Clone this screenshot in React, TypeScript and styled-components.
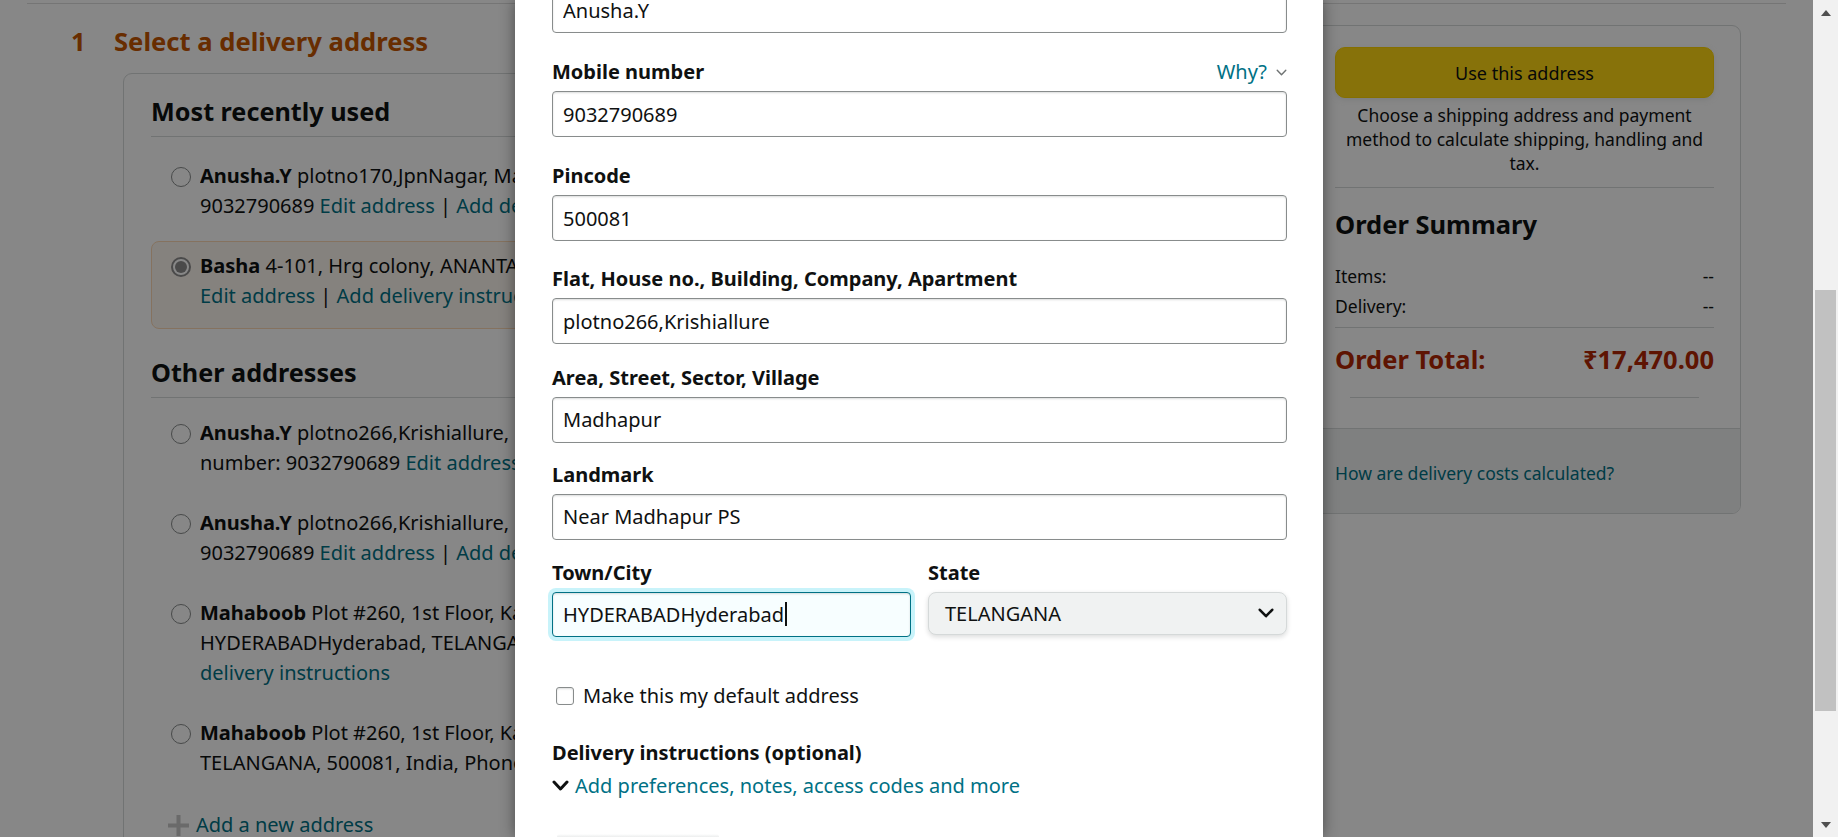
import React from "react";
import styled, { createGlobalStyle } from "styled-components";

const GlobalStyle = createGlobalStyle`
  html, body { margin: 0; padding: 0; height: 100%; overflow: hidden; }
  body {
    font-family: "Noto Sans", "Open Sans", "Liberation Sans", sans-serif;
    color: #0f1111;
    background: #fff;
  }
  #root { height: 100%; }
  *, *::before, *::after { box-sizing: border-box; }
`;

const Screen = styled.div`
  display: flex;
  width: 100%;
  height: 100vh;
`;

const Viewport = styled.div`
  position: relative;
  flex: 1;
  min-width: 0;
  overflow: hidden;
  background: #fff;
`;

const Page = styled.div`
  padding: 3px 27px 0;
`;

const Main = styled.div`
  display: flex;
  align-items: flex-start;
  gap: 24px;
  border-top: 1px solid #dddddd;
`;

const LeftCol = styled.div`
  flex: 1;
  min-width: 0;
  padding: 22px 0 0 44px;
`;

const StepHeader = styled.h2`
  display: flex;
  margin: 0;
  font-size: 25.6px;
  line-height: 32px;
  font-weight: 700;
  color: #c45500;
`;

const StepNumber = styled.span`
  width: 43px;
`;

const Card = styled.div`
  margin: 15px 0 0 52px;
  padding: 21px 27px 40px;
  border: 1px solid #d5d9d9;
  border-radius: 9px;
  overflow: hidden;
`;

const SectionTitle = styled.h3<{ $mt?: number }>`
  margin: ${(p) => p.$mt ?? 0}px 0 0;
  padding-bottom: 9px;
  border-bottom: 1px solid #d5d9d9;
  font-size: 25.2px;
  line-height: 32px;
  font-weight: 700;
  color: #0f1111;
`;

const AddressList = styled.div<{ $mt: number }>`
  display: flex;
  flex-direction: column;
  gap: 2px;
  margin-top: ${(p) => p.$mt}px;
`;

const AddressRow = styled.div<{ $selected?: boolean }>`
  display: flex;
  align-items: flex-start;
  gap: 9px;
  padding: 9px 0 17px 19px;
  border: 1px solid ${(p) => (p.$selected ? "#fbd8b4" : "transparent")};
  border-radius: 8px;
  background: ${(p) => (p.$selected ? "#fcf5ee" : "transparent")};
`;

const Radio = styled.span<{ $checked?: boolean }>`
  position: relative;
  flex: none;
  width: 20px;
  height: 20px;
  margin-top: 6px;
  border-radius: 50%;
  background: #fff;
  border: ${(p) => (p.$checked ? "2px solid #8c8c8c" : "1px solid #888c8c")};
  &::after {
    content: "";
    display: ${(p) => (p.$checked ? "block" : "none")};
    position: absolute;
    inset: 2px;
    border-radius: 50%;
    background: #8c8c8c;
  }
`;

const AddressText = styled.div`
  min-width: 0;
  overflow: hidden;
`;

const Line = styled.div`
  white-space: nowrap;
  font-size: 20px;
  line-height: 30px;
  color: #0f1111;
`;

const Name = styled.b`
  font-weight: 700;
`;

const Link = styled.span`
  color: #007185;
`;

const AddNew = styled.div`
  display: flex;
  align-items: center;
  gap: 7px;
  margin-top: 14px;
  padding-left: 17px;
  font-size: 20px;
  line-height: 30px;
  color: #007185;
`;

const RightCol = styled.aside`
  flex: none;
  width: 433px;
  margin: 21px 45px 0 0;
`;

const SummaryCard = styled.div`
  border: 1px solid #d5d9d9;
  border-radius: 9px;
  overflow: hidden;
  background: #fff;
`;

const SummaryTop = styled.div`
  padding: 21px 26px 30px;
`;

const PrimaryButton = styled.button`
  display: block;
  width: 100%;
  height: 51px;
  border: 1px solid #fcd200;
  border-radius: 10px;
  background: #ffd814;
  box-shadow: 0 2px 5px 0 rgba(213, 217, 217, 0.5);
  font-family: inherit;
  font-size: 18px;
  color: #0f1111;
`;

const Note = styled.p`
  margin: 5px 0 0;
  text-align: center;
  font-size: 17.5px;
  line-height: 24px;
  color: #0f1111;
`;

const Divider = styled.hr<{ $mt: number; $inset?: number }>`
  margin: ${(p) => p.$mt}px ${(p) => p.$inset ?? 0}px 0;
  border: 0;
  border-top: 1px solid #d5d9d9;
`;

const SummaryTitle = styled.h3`
  margin: 20px 0 0;
  font-size: 25.5px;
  line-height: 32px;
  font-weight: 700;
`;

const SummaryRows = styled.div`
  display: flex;
  flex-direction: column;
  gap: 6px;
  margin-top: 24px;
`;

const SummaryRow = styled.div`
  display: flex;
  justify-content: space-between;
  font-size: 17.5px;
  line-height: 24px;
`;

const TotalRow = styled.div`
  display: flex;
  justify-content: space-between;
  margin-top: 15px;
  font-size: 25.5px;
  line-height: 32px;
  font-weight: 700;
  color: #b12704;
`;

const SummaryBottom = styled.div`
  padding: 32px 26px 28px;
  border-top: 1px solid #d5d9d9;
  background: #f0f2f2;
  font-size: 17.5px;
  line-height: 24px;
  color: #007185;
`;

const Backdrop = styled.div`
  position: absolute;
  inset: 0;
  background: rgba(0, 0, 0, 0.47);
`;

const Modal = styled.div`
  position: absolute;
  top: 0;
  bottom: 0;
  left: 515px;
  width: 808px;
  padding: 0 36px 0 37px;
  background: #fff;
  box-shadow: 0 0 14px rgba(0, 0, 0, 0.45);
  overflow: hidden;
`;

const ModalBody = styled.div`
  margin-top: -13px;
  display: flex;
  flex-direction: column;
`;

const Field = styled.div<{ $mt?: number }>`
  display: flex;
  flex-direction: column;
  margin-top: ${(p) => p.$mt ?? 0}px;
  min-width: 0;
`;

const LabelRow = styled.div`
  display: flex;
  justify-content: space-between;
  align-items: center;
  margin-bottom: 4px;
`;

const Label = styled.label`
  font-size: 20px;
  line-height: 30px;
  font-weight: 700;
  color: #0f1111;
`;

const WhyLink = styled.span`
  display: flex;
  align-items: center;
  gap: 9px;
  font-size: 20px;
  line-height: 30px;
  color: #007185;
`;

const TextInput = styled.input`
  width: 100%;
  height: 46px;
  padding: 0 10px;
  border: 1px solid #888c8c;
  border-radius: 4px;
  box-shadow: inset 0 1px 2px rgba(15, 17, 17, 0.15);
  background: #fff;
  font-family: inherit;
  font-size: 20px;
  color: #0f1111;
  outline: none;
`;

const FocusedBox = styled.div`
  display: flex;
  align-items: center;
  height: 45px;
  padding: 0 10px;
  border: 1px solid #007185;
  border-radius: 4px;
  background: #f7feff;
  box-shadow: 0 0 0 4px #c8f3fa, inset 0 1px 2px rgba(15, 17, 17, 0.15);
  font-size: 20px;
  color: #0f1111;
  white-space: nowrap;
`;

const Caret = styled.span`
  width: 2px;
  height: 24px;
  margin-left: 1px;
  background: #0f1111;
`;

const TwoCols = styled.div`
  display: grid;
  grid-template-columns: 1fr 1fr;
  gap: 17px;
  margin-top: 18px;
  align-items: start;
`;

const SelectBox = styled.div`
  display: flex;
  align-items: center;
  justify-content: space-between;
  height: 43px;
  padding: 0 12px 0 16px;
  border: 1px solid #d5d9d9;
  border-radius: 8px;
  background: #f0f2f2;
  box-shadow: 0 2px 5px 0 rgba(15, 17, 17, 0.15);
  font-size: 20px;
  color: #0f1111;
`;

const CheckRow = styled.label`
  display: flex;
  align-items: center;
  gap: 9px;
  margin-top: 44px;
  padding-left: 4px;
  font-size: 20px;
  line-height: 30px;
`;

const CheckBox = styled.span`
  width: 18px;
  height: 18px;
  border: 1px solid #888c8c;
  border-radius: 3px;
  background: #fff;
  box-shadow: inset 0 1px 2px rgba(15, 17, 17, 0.15);
`;

const SubHeading = styled.div`
  margin-top: 27px;
  font-size: 20px;
  line-height: 30px;
  font-weight: 700;
`;

const ExpandLink = styled.div`
  display: flex;
  align-items: center;
  gap: 6px;
  margin-top: 3px;
  font-size: 20px;
  line-height: 30px;
  color: #007185;
`;

const ButtonShadowEdge = styled.div`
  align-self: flex-start;
  width: 162px;
  height: 3px;
  margin: 33px 0 0 5px;
  border-radius: 3px 3px 0 0;
  background: linear-gradient(#ffffff, #eceeee);
`;

const Scrollbar = styled.div`
  flex: none;
  width: 25px;
  display: flex;
  flex-direction: column;
  background: #f1f1f1;
`;

const ScrollArrow = styled.div`
  height: 25px;
  display: flex;
  align-items: center;
  justify-content: center;
`;

const ScrollTrack = styled.div`
  flex: 1;
  padding: 265px 2px 0;
`;

const Thumb = styled.div`
  height: 421px;
  background: #c1c1c1;
`;

const ChevronDown = ({ w, h, sw, color }: { w: number; h: number; sw: number; color: string }) => (
  <svg width={w} height={h} viewBox={`0 0 ${w} ${h}`} fill="none">
    <polyline
      points={`${sw / 2 + 0.5},${sw / 2 + 0.5} ${w / 2},${h - sw / 2 - 0.5} ${w - sw / 2 - 0.5},${sw / 2 + 0.5}`}
      stroke={color}
      strokeWidth={sw}
      strokeLinecap="round"
      strokeLinejoin="round"
    />
  </svg>
);

const PlusIcon = () => (
  <svg width="21" height="21" viewBox="0 0 21 21">
    <rect x="8.5" y="0" width="4" height="21" fill="#c8c8c8" />
    <rect x="0" y="8.5" width="21" height="4" fill="#c8c8c8" />
  </svg>
);

const Triangle = ({ up }: { up?: boolean }) => (
  <svg width="10" height="6" viewBox="0 0 10 6">
    <polygon points={up ? "0,6 5,0 10,6" : "0,0 5,6 10,0"} fill="#505050" />
  </svg>
);

export default function App() {
  return (
    <>
      <GlobalStyle />
      <Screen>
        <Viewport>
          <Page>
            <Main>
              <LeftCol>
                <StepHeader>
                  <StepNumber>1</StepNumber>
                  <span>Select a delivery address</span>
                </StepHeader>
                <Card>
                  <SectionTitle>Most recently used</SectionTitle>
                  <AddressList $mt={14}>
                    <AddressRow>
                      <Radio />
                      <AddressText>
                        <Line>
                          <Name>Anusha.Y</Name> plotno170,JpnNagar, Madhapur, HYDERABAD, TELANGANA, 500081, India, Phone number:
                        </Line>
                        <Line>
                          9032790689 <Link>Edit address</Link> | <Link>Add delivery instructions</Link>
                        </Line>
                      </AddressText>
                    </AddressRow>
                    <AddressRow $selected>
                      <Radio $checked />
                      <AddressText>
                        <Line>
                          <Name>Basha</Name> 4-101, Hrg colony, ANANTAPUR, ANDHRA PRADESH, 515001, India, Phone number: 9032790689
                        </Line>
                        <Line>
                          <Link>Edit address</Link> | <Link>Add delivery instructions</Link>
                        </Line>
                      </AddressText>
                    </AddressRow>
                  </AddressList>

                  <SectionTitle $mt={27}>Other addresses</SectionTitle>
                  <AddressList $mt={10}>
                    <AddressRow>
                      <Radio />
                      <AddressText>
                        <Line>
                          <Name>Anusha.Y</Name> plotno266,Krishiallure, Madhapur, HYDERABAD, TELANGANA, 500081, India, Phone
                        </Line>
                        <Line>
                          number: 9032790689 <Link>Edit address</Link> | <Link>Add delivery instructions</Link>
                        </Line>
                      </AddressText>
                    </AddressRow>
                    <AddressRow>
                      <Radio />
                      <AddressText>
                        <Line>
                          <Name>Anusha.Y</Name> plotno266,Krishiallure, Near Madhapur PS, HYDERABAD, TELANGANA, 500081, India, Phone number:
                        </Line>
                        <Line>
                          9032790689 <Link>Edit address</Link> | <Link>Add delivery instructions</Link>
                        </Line>
                      </AddressText>
                    </AddressRow>
                    <AddressRow>
                      <Radio />
                      <AddressText>
                        <Line>
                          <Name>Mahaboob</Name> Plot #260, 1st Floor, Kavuri Hills, Madhapur, Near Madhapur PS,
                        </Line>
                        <Line>
                          HYDERABADHyderabad, TELANGANA, 500081, India, Phone number: 9032790689 <Link>Edit address</Link> | <Link>Add</Link>
                        </Line>
                        <Line>
                          <Link>delivery instructions</Link>
                        </Line>
                      </AddressText>
                    </AddressRow>
                    <AddressRow>
                      <Radio />
                      <AddressText>
                        <Line>
                          <Name>Mahaboob</Name> Plot #260, 1st Floor, Kavuri Hills, Madhapur, HYDERABADHyderabad,
                        </Line>
                        <Line>
                          TELANGANA, 500081, India, Phone number: 9032790689 <Link>Edit address</Link> | <Link>Add delivery instructions</Link>
                        </Line>
                      </AddressText>
                    </AddressRow>
                  </AddressList>
                  <AddNew>
                    <PlusIcon />
                    <span>Add a new address</span>
                  </AddNew>
                </Card>
              </LeftCol>

              <RightCol>
                <SummaryCard>
                  <SummaryTop>
                    <PrimaryButton>Use this address</PrimaryButton>
                    <Note>
                      Choose a shipping address and payment method to calculate shipping, handling and tax.
                    </Note>
                    <Divider $mt={12} />
                    <SummaryTitle>Order Summary</SummaryTitle>
                    <SummaryRows>
                      <SummaryRow>
                        <span>Items:</span>
                        <span>--</span>
                      </SummaryRow>
                      <SummaryRow>
                        <span>Delivery:</span>
                        <span>--</span>
                      </SummaryRow>
                    </SummaryRows>
                    <Divider $mt={9} />
                    <TotalRow>
                      <span>Order Total:</span>
                      <span>₹17,470.00</span>
                    </TotalRow>
                    <Divider $mt={22} $inset={15} />
                  </SummaryTop>
                  <SummaryBottom>How are delivery costs calculated?</SummaryBottom>
                </SummaryCard>
              </RightCol>
            </Main>
          </Page>

          <Backdrop />

          <Modal role="dialog" aria-label="Add a new address">
            <ModalBody>
              <Field>
                <TextInput readOnly value="Anusha.Y" aria-label="Full name" />
              </Field>
              <Field $mt={24}>
                <LabelRow>
                  <Label>Mobile number</Label>
                  <WhyLink>
                    Why?
                    <ChevronDown w={11} h={7} sw={1.4} color="#6f7373" />
                  </WhyLink>
                </LabelRow>
                <TextInput readOnly value="9032790689" />
              </Field>
              <Field $mt={24}>
                <LabelRow>
                  <Label>Pincode</Label>
                </LabelRow>
                <TextInput readOnly value="500081" />
              </Field>
              <Field $mt={23}>
                <LabelRow>
                  <Label>Flat, House no., Building, Company, Apartment</Label>
                </LabelRow>
                <TextInput readOnly value="plotno266,Krishiallure" />
              </Field>
              <Field $mt={18.5}>
                <LabelRow>
                  <Label>Area, Street, Sector, Village</Label>
                </LabelRow>
                <TextInput readOnly value="Madhapur" />
              </Field>
              <Field $mt={17}>
                <LabelRow>
                  <Label>Landmark</Label>
                </LabelRow>
                <TextInput readOnly value="Near Madhapur PS" />
              </Field>
              <TwoCols>
                <Field>
                  <LabelRow>
                    <Label>Town/City</Label>
                  </LabelRow>
                  <FocusedBox role="textbox">
                    HYDERABADHyderabad
                    <Caret />
                  </FocusedBox>
                </Field>
                <Field>
                  <LabelRow>
                    <Label>State</Label>
                  </LabelRow>
                  <SelectBox role="combobox">
                    <span>TELANGANA</span>
                    <ChevronDown w={16} h={10} sw={2.6} color="#0f1111" />
                  </SelectBox>
                </Field>
              </TwoCols>
              <CheckRow>
                <CheckBox />
                Make this my default address
              </CheckRow>
              <SubHeading>Delivery instructions (optional)</SubHeading>
              <ExpandLink>
                <ChevronDown w={17} h={11} sw={3} color="#0f1111" />
                <span>Add preferences, notes, access codes and more</span>
              </ExpandLink>
              <ButtonShadowEdge />
            </ModalBody>
          </Modal>
        </Viewport>

        <Scrollbar>
          <ScrollArrow>
            <Triangle up />
          </ScrollArrow>
          <ScrollTrack>
            <Thumb />
          </ScrollTrack>
          <ScrollArrow>
            <Triangle />
          </ScrollArrow>
        </Scrollbar>
      </Screen>
    </>
  );
}
